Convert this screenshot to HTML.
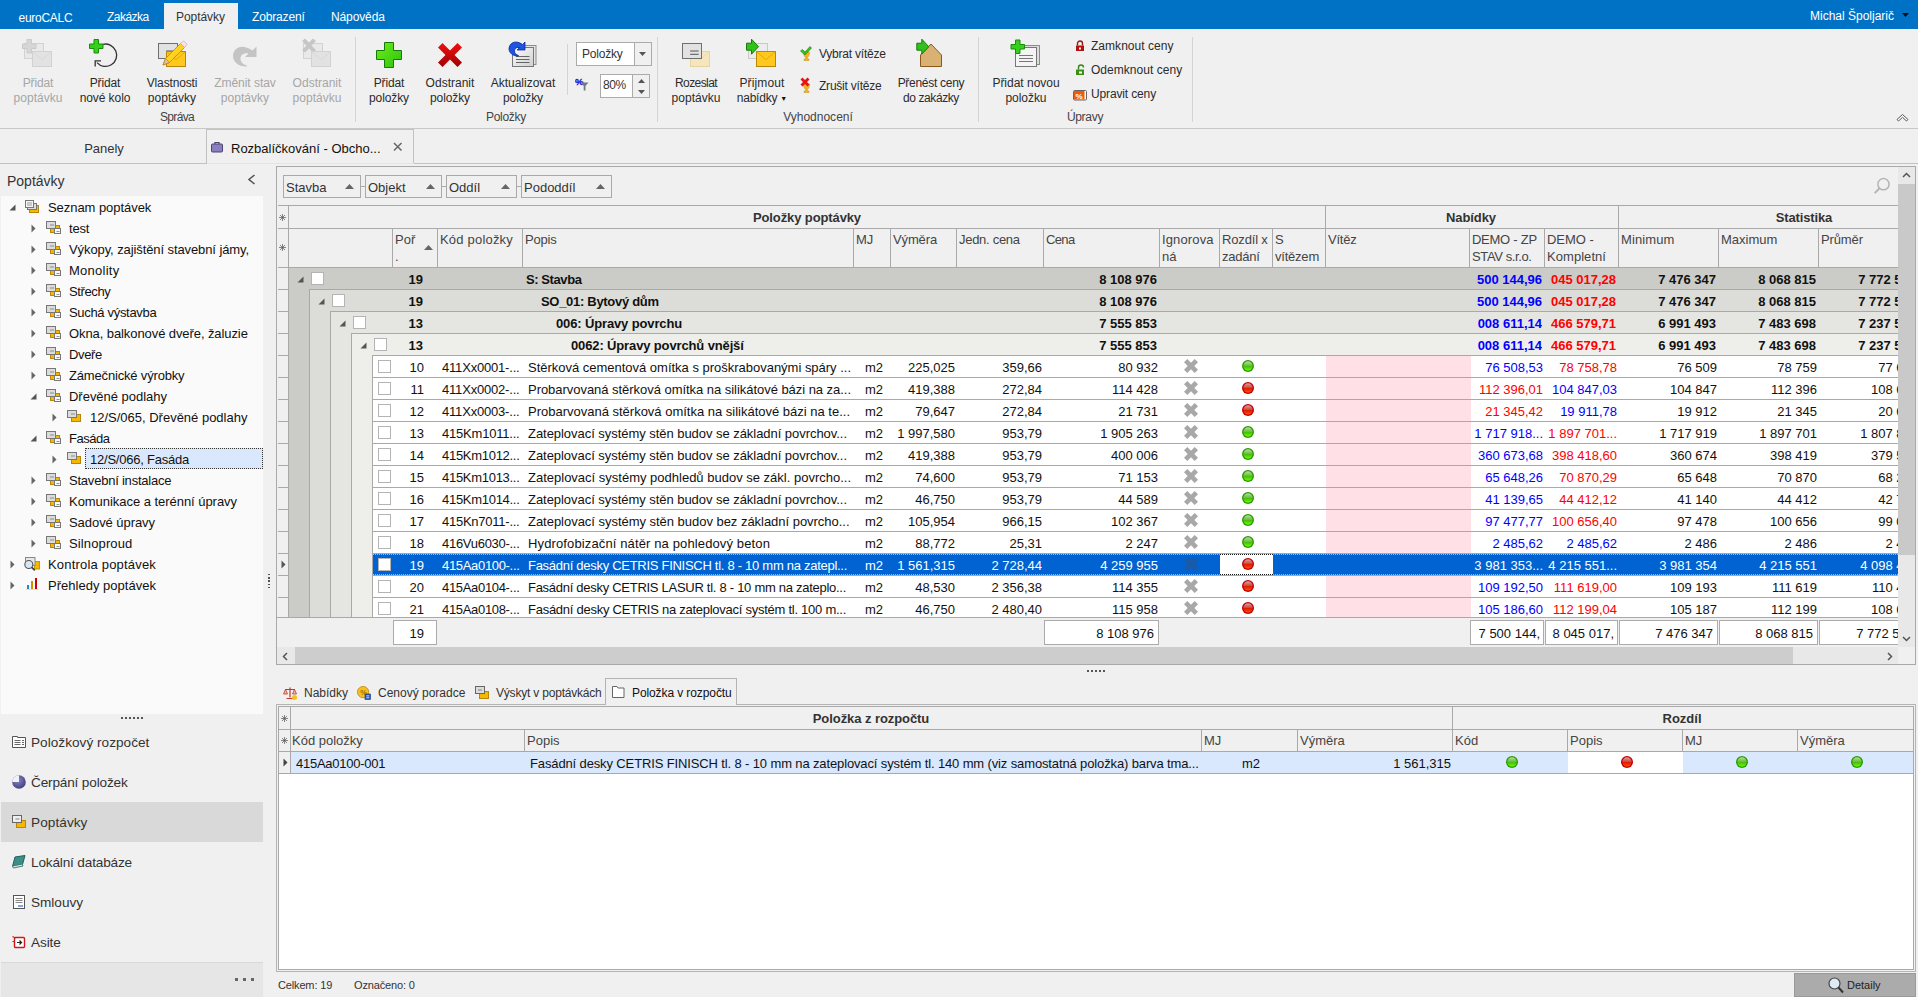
<!DOCTYPE html>
<html lang="cs"><head><meta charset="utf-8"><title>euroCALC</title><style>
*{box-sizing:border-box;margin:0;padding:0}
html,body{width:1918px;height:997px;overflow:hidden;background:#f0f0f0}
body{font-family:"Liberation Sans","DejaVu Sans",sans-serif;font-size:13px;color:#222;position:relative;line-height:15px}
.a{position:absolute;white-space:nowrap}
.c{text-align:center}
.r{text-align:right}
.b{font-weight:bold}
.dis{color:#a6a6a6}
#top{left:0;top:0;width:1918px;height:29px;background:#0072c6;color:#fff}
.sep{width:1px;background:#d4d4d4}
.hl{height:1px;background:#c6c6c6}
.rb{font-size:12px;line-height:15px;color:#2b2b2b}
.rb.dis{color:#a6a6a6}
.gl{color:#444}
.tree{font-size:13px;color:#111}
.hdr{color:#444;font-size:13px}
.cell{font-size:13px;color:#111;height:22px;line-height:22px;overflow:hidden}
.blue{color:#0000ff}
.red{color:#ff0000}
.cell.sw{color:#fff}
.cb{width:13px;height:13px;background:#fff;border:1px solid #b4b4b4}
.fc{background:#fff;border:1px solid #ababab;height:25px;line-height:25px;text-align:right;padding-right:4px;font-size:13px;color:#111;overflow:hidden}
</style></head><body>
<div class="a " style="left:0px;top:0px;width:1918px;height:29px;background:#0072c6"></div>
<div class="a " style="left:164px;top:3px;width:74px;height:27px;background:#f0f0f0"></div>
<div class="a " style="left:18.5px;top:11px;color:#fff;font-size:12px;letter-spacing:-0.279px;">euroCALC</div>
<div class="a " style="left:107px;top:10px;color:#fff;font-size:12px;letter-spacing:-0.537px;">Zakázka</div>
<div class="a " style="left:176px;top:10px;color:#333;font-size:12px;letter-spacing:-0.057px;">Poptávky</div>
<div class="a " style="left:252px;top:10px;color:#fff;font-size:12px;letter-spacing:-0.159px;">Zobrazení</div>
<div class="a " style="left:331px;top:10px;color:#fff;font-size:12px;letter-spacing:-0.115px;">Nápověda</div>
<div class="a " style="left:1810px;top:9px;color:#fff;font-size:12px">Michal Špoljarič</div>
<svg class="a" style="left:1902px;top:13px;" width="7" height="4" viewBox="0 0 7 4"><path d="M0 0h7L3.5 4z" fill="#111"/></svg>
<div class="a " style="left:0px;top:128px;width:1918px;height:1px;background:#c8c8c8"></div>
<svg class="a" style="left:22px;top:37px;" width="32" height="32" viewBox="0 0 32 32"><rect x="2.500" y="6.500" width="19" height="15" fill="#e9e9e9" stroke="#d2d2d2"/><path d="M10 14.500h9M10 17.500h9" stroke="#d2d2d2"/><path d="M5.0 2.5h4.5v4.5h4.5v4.5h-4.5v4.5h-4.5v-4.5h-4.5v-4.5h4.5z" fill="#d6d6d6" stroke="#cacaca" stroke-width="1"/><rect x="10.5" y="14.5" width="19" height="15" fill="#e2e2e2" stroke="#d2d2d2"/><path d="M10.5 14.5L20.0 22.75L29.5 14.5" fill="none" stroke="#d6d6d6" stroke-width="0.8"/></svg>
<div class="a rb dis c" style="left:-22.0px;top:76px;width:120px;letter-spacing:-0.127px;">Přidat</div>
<div class="a rb dis c" style="left:-22.0px;top:91px;width:120px;letter-spacing:0.012px;">poptávku</div>
<svg class="a" style="left:89px;top:37px;" width="32" height="32" viewBox="0 0 32 32"><path d="M14 7.300A11.200 11.200 0 1 1 8 25.600" fill="none" stroke="#333" stroke-width="1.300"/><path d="M6.200 29.500V23.800H12" fill="none" stroke="#333" stroke-width="1.300"/><path d="M5.0 2.5h4.5v4.5h4.5v4.5h-4.5v4.5h-4.5v-4.5h-4.5v-4.5h4.5z" fill="#35d01c" stroke="#1c8a0d" stroke-width="1"/></svg>
<div class="a rb c" style="left:45.0px;top:76px;width:120px;letter-spacing:-0.127px;">Přidat</div>
<div class="a rb c" style="left:45.0px;top:91px;width:120px;letter-spacing:-0.075px;">nové kolo</div>
<svg class="a" style="left:156px;top:37px;" width="32" height="32" viewBox="0 0 32 32"><rect x="2.5" y="6.5" width="19" height="15" fill="#e2e2e2" stroke="#6f6f6f"/><path d="M10.100000000000001 14.0h8.55M10.100000000000001 17.299999999999997h8.55" stroke="#555" stroke-width="1"/><rect x="10.5" y="14.5" width="19" height="15" fill="#ffc81e" stroke="#b8860b"/><path d="M10.5 14.5L20.0 22.75L29.5 14.5" fill="none" stroke="#d9a400" stroke-width="0.8"/><path d="M7 28l2.500-6.500L24.500 6.500l4 4L13.500 25.500z" fill="#ffd21f" stroke="#b8860b" stroke-width="0.800"/><path d="M7 28l2.500-6.500l4 4z" fill="#e8c08a" stroke="#9a7a40" stroke-width="0.600"/><path d="M24.500 6.500l1.500-1.500a2 2 0 0 1 3 0l1 1a2 2 0 0 1 0 3l-1.500 1.500z" fill="#fbe3e3" stroke="#d99" stroke-width="0.600"/></svg>
<div class="a rb c" style="left:112.0px;top:76px;width:120px;letter-spacing:-0.153px;">Vlastnosti</div>
<div class="a rb c" style="left:112.0px;top:91px;width:120px;letter-spacing:0.034px;">poptávky</div>
<svg class="a" style="left:229px;top:37px;" width="32" height="32" viewBox="0 0 32 32"><path d="M27.500 9.500V20H16l3.500-3.500C15 15.500 11.500 18 11.500 21.500C11.500 25 14 27.500 18 28.500l-0.500 1C9 29.500 4 24.500 4 19C4 11.500 12 5.500 23.500 13.500z" fill="#c4c4c4"/></svg>
<div class="a rb dis c" style="left:185.0px;top:76px;width:120px;letter-spacing:-0.029px;">Změnit stav</div>
<div class="a rb dis c" style="left:185.0px;top:91px;width:120px;letter-spacing:0.034px;">poptávky</div>
<svg class="a" style="left:301px;top:37px;" width="32" height="32" viewBox="0 0 32 32"><rect x="2.500" y="6.500" width="19" height="15" fill="#e9e9e9" stroke="#d2d2d2"/><path d="M10 14.500h9M10 17.500h9" stroke="#d2d2d2"/><path d="M1 4l3-2.500l4 4l4-4l3 2.500l-4.500 4.500l4.500 4.500l-3 2.500l-4-4l-4 4l-3-2.500l4.500-4.500z" fill="#c6c6c6"/><rect x="10.5" y="14.5" width="19" height="15" fill="#e2e2e2" stroke="#d2d2d2"/><path d="M10.5 14.5L20.0 22.75L29.5 14.5" fill="none" stroke="#d6d6d6" stroke-width="0.8"/></svg>
<div class="a rb dis c" style="left:257.0px;top:76px;width:120px;letter-spacing:0.012px;">Odstranit</div>
<div class="a rb dis c" style="left:257.0px;top:91px;width:120px;letter-spacing:0.012px;">poptávku</div>
<div class="a rb gl c" style="left:77.0px;top:110px;width:200px;letter-spacing:-0.639px;">Správa</div>
<div class="a sep" style="left:355px;top:37px;width:1px;height:85px;"></div>
<svg class="a" style="left:373px;top:37px;" width="32" height="32" viewBox="0 0 32 32"><defs><linearGradient id="gp" x1="0" y1="0" x2="1" y2="1"><stop offset="0" stop-color="#6cf018"/><stop offset="1" stop-color="#2fc010"/></linearGradient></defs><path d="M11.500 5.500h9v8h8v9h-8v8h-9v-8h-8v-9h8z" fill="url(#gp)" stroke="#157a0a" stroke-width="1"/></svg>
<div class="a rb c" style="left:329.0px;top:76px;width:120px;letter-spacing:-0.127px;">Přidat</div>
<div class="a rb c" style="left:329.0px;top:91px;width:120px;letter-spacing:-0.113px;">položky</div>
<svg class="a" style="left:434px;top:37px;" width="32" height="32" viewBox="0 0 32 32"><defs><linearGradient id="gx" x1="0" y1="0" x2="0" y2="1"><stop offset="0" stop-color="#f01010"/><stop offset="1" stop-color="#a00000"/></linearGradient></defs><path d="M4 10.500L8.500 6L16 13.500L23.500 6L28 10.500L20.500 18L28 25.500L23.500 30L16 22.500L8.500 30L4 25.500L11.500 18z" fill="url(#gx)"/></svg>
<div class="a rb c" style="left:390.0px;top:76px;width:120px;letter-spacing:0.012px;">Odstranit</div>
<div class="a rb c" style="left:390.0px;top:91px;width:120px;letter-spacing:-0.113px;">položky</div>
<svg class="a" style="left:507px;top:37px;" width="32" height="32" viewBox="0 0 32 32"><defs><linearGradient id="gd" x1="0" y1="0" x2="1" y2="1"><stop offset="0" stop-color="#fdfdfd"/><stop offset="1" stop-color="#cfcfcf"/></linearGradient></defs><rect x="8" y="8.500" width="21" height="19" fill="#e4e4e4" stroke="#8c8c8c"/><rect x="5.500" y="10.500" width="21" height="19" fill="url(#gd)" stroke="#777"/><path d="M9 19.500h13.500M9 22.500h13.500M9 25.500h13.500" stroke="#666" stroke-width="1.100"/><path d="M18 5V13H10l2.500-2.500C9.500 9.800 7.500 11.500 7.500 14C7.500 16 9 17.800 11.500 18.500l-0.500 0.700C5.500 19 2 15.500 2 12C2 6.500 8 2 15.500 7.500z" fill="#1f54e0" stroke="#0a2aa0" stroke-width="0.800"/></svg>
<div class="a rb c" style="left:463.0px;top:76px;width:120px;letter-spacing:-0.000px;">Aktualizovat</div>
<div class="a rb c" style="left:463.0px;top:91px;width:120px;letter-spacing:-0.113px;">položky</div>
<div class="a sep" style="left:567px;top:44px;width:1px;height:51px;"></div>
<div class="a " style="left:576px;top:42px;width:76px;height:24px;background:#fff;border:1px solid #ababab"></div>
<div class="a " style="left:634px;top:43px;width:17px;height:22px;background:#f0f0f0;border-left:1px solid #ababab"></div>
<div class="a " style="left:582px;top:47px;color:#333;font-size:12px;letter-spacing:-0.204px;">Položky</div>
<svg class="a" style="left:639px;top:52px;" width="7" height="4" viewBox="0 0 7 4"><path d="M0 0h7L3.500 4z" fill="#555"/></svg>
<svg class="a" style="left:575px;top:76px;" width="16" height="17" viewBox="0 0 16 17"><text x="0" y="9.300" font-family="Liberation Sans, sans-serif" font-size="9.500" font-weight="bold" fill="#1010d0" stroke="#1010d0" stroke-width="0.300">%</text><path d="M6 6.500h7.500l-3 3.500v4.500h-1.800v-4.500z" fill="#70788a"/></svg>
<div class="a " style="left:600px;top:74px;width:50px;height:24px;background:#fff;border:1px solid #ababab"></div>
<div class="a " style="left:632px;top:75px;width:17px;height:22px;background:#f0f0f0;border-left:1px solid #ababab"></div>
<div class="a " style="left:603px;top:78px;color:#333;font-size:12px;letter-spacing:-0.477px;">80%</div>
<svg class="a" style="left:638px;top:79px;" width="7" height="4" viewBox="0 0 7 4"><path d="M0 4h7L3.500 0z" fill="#555"/></svg>
<svg class="a" style="left:638px;top:90px;" width="7" height="4" viewBox="0 0 7 4"><path d="M0 0h7L3.500 4z" fill="#555"/></svg>
<div class="a rb gl c" style="left:406.0px;top:110px;width:200px;letter-spacing:-0.304px;">Položky</div>
<div class="a sep" style="left:657px;top:37px;width:1px;height:85px;"></div>
<svg class="a" style="left:680px;top:37px;" width="32" height="32" viewBox="0 0 32 32"><rect x="10.5" y="14.5" width="19" height="15" fill="#f5e6bd" stroke="#e6d3a0"/><path d="M10.5 14.5L20.0 22.75L29.5 14.5" fill="none" stroke="#ead9a8" stroke-width="0.8"/><rect x="2.5" y="6.5" width="19" height="15" fill="#e2e2e2" stroke="#6f6f6f"/><path d="M10.100000000000001 14.0h8.55M10.100000000000001 17.299999999999997h8.55" stroke="#555" stroke-width="1"/></svg>
<div class="a rb c" style="left:636.0px;top:76px;width:120px;letter-spacing:-0.586px;">Rozeslat</div>
<div class="a rb c" style="left:636.0px;top:91px;width:120px;letter-spacing:0.012px;">poptávku</div>
<svg class="a" style="left:746px;top:37px;" width="32" height="32" viewBox="0 0 32 32"><rect x="2.500" y="6.500" width="19" height="15" fill="#ececec" stroke="#c9c9c9"/><rect x="10.5" y="14.5" width="19" height="15" fill="#ffc81e" stroke="#b8860b"/><path d="M10.5 14.5L20.0 22.75L29.5 14.5" fill="none" stroke="#d9a400" stroke-width="0.8"/><path d="M0.5 6.2h5v-4l7 7.5l-7 7.5v-4h-5z" fill="#2fc21a" stroke="#1a7a0c" stroke-width="1"/></svg>
<div class="a rb c" style="left:702.0px;top:76px;width:120px;letter-spacing:0.148px;">Přijmout</div>
<div class="a rb c" style="left:702.0px;top:91px;width:120px;letter-spacing:-0.219px;">nabídky <span style="font-size:7px;position:relative;top:-1px;color:#111;letter-spacing:0">&#9660;</span></div>
<svg class="a" style="left:799px;top:45px;" width="16" height="17" viewBox="0 0 16 17"><path d="M4.500 7h6c0 3-1 5-2.200 5.500v1.500h1.700v1.500h-5v-1.500h1.700v-1.500c-1.200-0.500-2.200-2.500-2.200-5.500z" fill="#f0b428" stroke="#c8901a" stroke-width="0.5"/><path d="M1.500 6l2-1.500l2.500 2.500l5-5.500l1.500 1.500l-6.500 7z" fill="#35c21a" stroke="#1c7a0c" stroke-width="0.6"/></svg>
<div class="a rb" style="left:819px;top:47px;letter-spacing:-0.223px;">Vybrat vítěze</div>
<svg class="a" style="left:799px;top:77px;" width="16" height="17" viewBox="0 0 16 17"><path d="M4.500 7h6c0 3-1 5-2.200 5.500v1.500h1.700v1.500h-5v-1.500h1.700v-1.500c-1.200-0.500-2.200-2.500-2.200-5.500z" fill="#f0b428" stroke="#c8901a" stroke-width="0.5"/><path d="M1.500 2.500l2-2l2.500 2.500l2.500-2.500l2 2l-2.500 2.500l2.500 2.500l-2 2l-2.500-2.500l-2.500 2.500l-2-2l2.500-2.500z" fill="#e81414"/></svg>
<div class="a rb" style="left:819px;top:79px;letter-spacing:-0.220px;">Zrušit vítěze</div>
<svg class="a" style="left:915px;top:37px;" width="32" height="32" viewBox="0 0 32 32"><path d="M5.500 29.500v-11.500l10.500-11l10.500 11v11.500z" fill="#d9b172" stroke="#8a5a1c" stroke-width="1"/><path d="M1.8 6.2h5v-4l7 7.5l-7 7.5v-4h-5z" fill="#2fc21a" stroke="#1a7a0c" stroke-width="1"/></svg>
<div class="a rb c" style="left:871.0px;top:76px;width:120px;letter-spacing:-0.279px;">Přenést ceny</div>
<div class="a rb c" style="left:871.0px;top:91px;width:120px;letter-spacing:-0.423px;">do zakázky</div>
<div class="a rb gl c" style="left:718.0px;top:110px;width:200px;letter-spacing:0.008px;">Vyhodnocení</div>
<div class="a sep" style="left:978px;top:37px;width:1px;height:85px;"></div>
<svg class="a" style="left:1010px;top:37px;" width="32" height="32" viewBox="0 0 32 32"><rect x="8.500" y="8.500" width="21" height="19" fill="#dcdcdc" stroke="#8c8c8c"/><rect x="5.500" y="10.500" width="21" height="19" fill="#f4f4f4" stroke="#777"/><path d="M9 18.500h14M9 21.500h14M9 24.500h14M9 27" stroke="#777" stroke-width="1.100"/><path d="M5.5 3h4.5v4.5h4.5v4.5h-4.5v4.5h-4.5v-4.5h-4.5v-4.5h4.5z" fill="#35d01c" stroke="#1c8a0d" stroke-width="1"/></svg>
<div class="a rb c" style="left:966.0px;top:76px;width:120px;letter-spacing:-0.016px;">Přidat novou</div>
<div class="a rb c" style="left:966.0px;top:91px;width:120px;letter-spacing:-0.054px;">položku</div>
<svg class="a" style="left:1074px;top:40px;" width="12" height="12" viewBox="0 0 12 12"><path d="M3.500 5.500v-2a2.500 2.500 0 0 1 5 0v2" fill="none" stroke="#a01414" stroke-width="1.400"/><rect x="2" y="5.500" width="8" height="5.500" fill="#b01010"/><rect x="5" y="7.500" width="2" height="2" fill="#fff"/></svg>
<div class="a rb" style="left:1091px;top:39px;letter-spacing:0.035px;">Zamknout ceny</div>
<svg class="a" style="left:1074px;top:64px;" width="12" height="12" viewBox="0 0 12 12"><path d="M4.500 5.500v-2a2.500 2.500 0 0 1 5 0" fill="none" stroke="#2f8a14" stroke-width="1.400"/><rect x="2" y="5.500" width="8" height="5.500" fill="#3a8f14"/><rect x="5" y="7.500" width="3" height="2" fill="#fff"/></svg>
<div class="a rb" style="left:1091px;top:63px;letter-spacing:0.034px;">Odemknout ceny</div>
<svg class="a" style="left:1073px;top:90px;" width="14" height="11" viewBox="0 0 14 11"><rect x="0.500" y="0.500" width="13" height="9.500" rx="1" fill="#fff" stroke="#666"/><rect x="1" y="1" width="10.500" height="8.500" fill="#f05a0a"/><text x="2.500" y="8.500" font-family="Liberation Sans, sans-serif" font-size="8" font-weight="bold" fill="#fff">%</text></svg>
<div class="a rb" style="left:1091px;top:87px;letter-spacing:-0.142px;">Upravit ceny</div>
<div class="a rb gl c" style="left:985.0px;top:110px;width:200px;letter-spacing:-0.303px;">Úpravy</div>
<div class="a sep" style="left:1192px;top:37px;width:1px;height:85px;"></div>
<svg class="a" style="left:1896px;top:113px;" width="13" height="9" viewBox="0 0 13 9"><path d="M1 6.500l5.500-5l5.500 5l-1.500 1.500l-4-3.700l-4 3.700z" fill="#fff" stroke="#555" stroke-width="1"/></svg>
<div class="a " style="left:0px;top:163px;width:206px;height:1px;background:#c2c2c2"></div>
<div class="a  c" style="left:4.0px;top:141px;width:200px;font-size:13px;color:#333">Panely</div>
<div class="a " style="left:206px;top:129px;width:208px;height:35px;background:#f0f0f0;border:1px solid #c2c2c2;border-bottom:none"></div>
<div class="a " style="left:414px;top:163px;width:1504px;height:1px;background:#c2c2c2"></div>
<div class="a " style="left:207px;top:163px;width:207px;height:1px;background:#e4e4e4"></div>
<svg class="a" style="left:211px;top:141px;" width="13" height="12" viewBox="0 0 13 12"><path d="M4 3v-1.500h4v1.500" fill="none" stroke="#4a4470" stroke-width="1.200"/><rect x="0.500" y="3" width="11" height="8" rx="1" fill="#8a7fc0" stroke="#4a4470"/></svg>
<div class="a " style="left:231px;top:141px;font-size:13px;color:#111">Rozbalíčkování - Obcho...</div>
<svg class="a" style="left:393px;top:142px;" width="10" height="10" viewBox="0 0 10 10"><path d="M1 1l7.500 7.500M8.500 1l-7.500 7.500" stroke="#666" stroke-width="1.500"/></svg>
<div class="a " style="left:7px;top:172px;font-size:14px;color:#333;line-height:18px">Poptávky</div>
<svg class="a" style="left:247px;top:174px;" width="9" height="11" viewBox="0 0 9 11"><path d="M7.500 1l-5.500 4.500l5.500 4.500" fill="none" stroke="#555" stroke-width="1.600"/></svg>
<div class="a " style="left:1px;top:196px;width:262px;height:518px;background:#fafafa"></div>
<svg class="a" style="left:9px;top:204px;" width="7" height="7" viewBox="0 0 7 7"><path d="M6.500 0.500v6h-6z" fill="#555"/></svg>
<svg class="a" style="left:25px;top:200px;" width="16" height="14" viewBox="0 0 16 14"><rect x="4.500" y="5.500" width="9" height="7" fill="#f5b800" stroke="#b8860b"/><rect x="2.500" y="3.500" width="9" height="6" fill="#dcdcdc" stroke="#777"/><rect x="0.500" y="0.500" width="8" height="7" fill="#f4f4f4" stroke="#777"/><path d="M2 3h5M2 5h5" stroke="#888" stroke-width="0.800"/></svg>
<div class="a tree" style="left:48px;top:198px;height:20px;line-height:20px;letter-spacing:-0.052px;">Seznam poptávek</div>
<svg class="a" style="left:31px;top:224px;" width="5" height="9" viewBox="0 0 5 9"><path d="M0.500 0.500l4 4l-4 4z" fill="#666"/></svg>
<svg class="a" style="left:46px;top:221px;" width="16" height="14" viewBox="0 0 16 14"><rect x="4.500" y="4.500" width="9" height="7" fill="#f5b800" stroke="#b8860b"/><rect x="0.500" y="0.500" width="9" height="7" fill="#dcdcdc" stroke="#777"/><path d="M4 4h4" stroke="#777" stroke-width="0.800"/><rect x="8.500" y="7.500" width="6" height="5" fill="#fafafa" stroke="#777"/><path d="M10.500 10.500h3" stroke="#777" stroke-width="0.800"/></svg>
<div class="a tree" style="left:69px;top:219px;height:20px;line-height:20px;letter-spacing:-0.167px;">test</div>
<svg class="a" style="left:31px;top:245px;" width="5" height="9" viewBox="0 0 5 9"><path d="M0.500 0.500l4 4l-4 4z" fill="#666"/></svg>
<svg class="a" style="left:46px;top:242px;" width="16" height="14" viewBox="0 0 16 14"><rect x="4.500" y="4.500" width="9" height="7" fill="#f5b800" stroke="#b8860b"/><rect x="0.500" y="0.500" width="9" height="7" fill="#dcdcdc" stroke="#777"/><path d="M4 4h4" stroke="#777" stroke-width="0.800"/><rect x="8.500" y="7.500" width="6" height="5" fill="#fafafa" stroke="#777"/><path d="M10.500 10.500h3" stroke="#777" stroke-width="0.800"/></svg>
<div class="a tree" style="left:69px;top:240px;height:20px;line-height:20px;letter-spacing:-0.095px;">Výkopy, zajištění stavební jámy,</div>
<svg class="a" style="left:31px;top:266px;" width="5" height="9" viewBox="0 0 5 9"><path d="M0.500 0.500l4 4l-4 4z" fill="#666"/></svg>
<svg class="a" style="left:46px;top:263px;" width="16" height="14" viewBox="0 0 16 14"><rect x="4.500" y="4.500" width="9" height="7" fill="#f5b800" stroke="#b8860b"/><rect x="0.500" y="0.500" width="9" height="7" fill="#dcdcdc" stroke="#777"/><path d="M4 4h4" stroke="#777" stroke-width="0.800"/><rect x="8.500" y="7.500" width="6" height="5" fill="#fafafa" stroke="#777"/><path d="M10.500 10.500h3" stroke="#777" stroke-width="0.800"/></svg>
<div class="a tree" style="left:69px;top:261px;height:20px;line-height:20px;letter-spacing:0.247px;">Monolity</div>
<svg class="a" style="left:31px;top:287px;" width="5" height="9" viewBox="0 0 5 9"><path d="M0.500 0.500l4 4l-4 4z" fill="#666"/></svg>
<svg class="a" style="left:46px;top:284px;" width="16" height="14" viewBox="0 0 16 14"><rect x="4.500" y="4.500" width="9" height="7" fill="#f5b800" stroke="#b8860b"/><rect x="0.500" y="0.500" width="9" height="7" fill="#dcdcdc" stroke="#777"/><path d="M4 4h4" stroke="#777" stroke-width="0.800"/><rect x="8.500" y="7.500" width="6" height="5" fill="#fafafa" stroke="#777"/><path d="M10.500 10.500h3" stroke="#777" stroke-width="0.800"/></svg>
<div class="a tree" style="left:69px;top:282px;height:20px;line-height:20px;letter-spacing:-0.383px;">Střechy</div>
<svg class="a" style="left:31px;top:308px;" width="5" height="9" viewBox="0 0 5 9"><path d="M0.500 0.500l4 4l-4 4z" fill="#666"/></svg>
<svg class="a" style="left:46px;top:305px;" width="16" height="14" viewBox="0 0 16 14"><rect x="4.500" y="4.500" width="9" height="7" fill="#f5b800" stroke="#b8860b"/><rect x="0.500" y="0.500" width="9" height="7" fill="#dcdcdc" stroke="#777"/><path d="M4 4h4" stroke="#777" stroke-width="0.800"/><rect x="8.500" y="7.500" width="6" height="5" fill="#fafafa" stroke="#777"/><path d="M10.500 10.500h3" stroke="#777" stroke-width="0.800"/></svg>
<div class="a tree" style="left:69px;top:303px;height:20px;line-height:20px;letter-spacing:-0.320px;">Suchá výstavba</div>
<svg class="a" style="left:31px;top:329px;" width="5" height="9" viewBox="0 0 5 9"><path d="M0.500 0.500l4 4l-4 4z" fill="#666"/></svg>
<svg class="a" style="left:46px;top:326px;" width="16" height="14" viewBox="0 0 16 14"><rect x="4.500" y="4.500" width="9" height="7" fill="#f5b800" stroke="#b8860b"/><rect x="0.500" y="0.500" width="9" height="7" fill="#dcdcdc" stroke="#777"/><path d="M4 4h4" stroke="#777" stroke-width="0.800"/><rect x="8.500" y="7.500" width="6" height="5" fill="#fafafa" stroke="#777"/><path d="M10.500 10.500h3" stroke="#777" stroke-width="0.800"/></svg>
<div class="a tree" style="left:69px;top:324px;height:20px;line-height:20px;letter-spacing:-0.086px;">Okna, balkonové dveře, žaluzie</div>
<svg class="a" style="left:31px;top:350px;" width="5" height="9" viewBox="0 0 5 9"><path d="M0.500 0.500l4 4l-4 4z" fill="#666"/></svg>
<svg class="a" style="left:46px;top:347px;" width="16" height="14" viewBox="0 0 16 14"><rect x="4.500" y="4.500" width="9" height="7" fill="#f5b800" stroke="#b8860b"/><rect x="0.500" y="0.500" width="9" height="7" fill="#dcdcdc" stroke="#777"/><path d="M4 4h4" stroke="#777" stroke-width="0.800"/><rect x="8.500" y="7.500" width="6" height="5" fill="#fafafa" stroke="#777"/><path d="M10.500 10.500h3" stroke="#777" stroke-width="0.800"/></svg>
<div class="a tree" style="left:69px;top:345px;height:20px;line-height:20px;letter-spacing:-0.358px;">Dveře</div>
<svg class="a" style="left:31px;top:371px;" width="5" height="9" viewBox="0 0 5 9"><path d="M0.500 0.500l4 4l-4 4z" fill="#666"/></svg>
<svg class="a" style="left:46px;top:368px;" width="16" height="14" viewBox="0 0 16 14"><rect x="4.500" y="4.500" width="9" height="7" fill="#f5b800" stroke="#b8860b"/><rect x="0.500" y="0.500" width="9" height="7" fill="#dcdcdc" stroke="#777"/><path d="M4 4h4" stroke="#777" stroke-width="0.800"/><rect x="8.500" y="7.500" width="6" height="5" fill="#fafafa" stroke="#777"/><path d="M10.500 10.500h3" stroke="#777" stroke-width="0.800"/></svg>
<div class="a tree" style="left:69px;top:366px;height:20px;line-height:20px;letter-spacing:-0.171px;">Zámečnické výrobky</div>
<svg class="a" style="left:30px;top:393px;" width="7" height="7" viewBox="0 0 7 7"><path d="M6.500 0.500v6h-6z" fill="#555"/></svg>
<svg class="a" style="left:46px;top:389px;" width="16" height="14" viewBox="0 0 16 14"><rect x="4.500" y="4.500" width="9" height="7" fill="#f5b800" stroke="#b8860b"/><rect x="0.500" y="0.500" width="9" height="7" fill="#dcdcdc" stroke="#777"/><path d="M4 4h4" stroke="#777" stroke-width="0.800"/><rect x="8.500" y="7.500" width="6" height="5" fill="#fafafa" stroke="#777"/><path d="M10.500 10.500h3" stroke="#777" stroke-width="0.800"/></svg>
<div class="a tree" style="left:69px;top:387px;height:20px;line-height:20px;letter-spacing:-0.020px;">Dřevěné podlahy</div>
<svg class="a" style="left:52px;top:413px;" width="5" height="9" viewBox="0 0 5 9"><path d="M0.500 0.500l4 4l-4 4z" fill="#666"/></svg>
<svg class="a" style="left:67px;top:410px;" width="16" height="14" viewBox="0 0 16 14"><rect x="4.500" y="4.500" width="9" height="7" fill="#f5b800" stroke="#b8860b"/><rect x="0.500" y="0.500" width="9" height="7" fill="#dcdcdc" stroke="#777"/><path d="M4 4h4" stroke="#777" stroke-width="0.800"/></svg>
<div class="a tree" style="left:90px;top:408px;height:20px;line-height:20px;letter-spacing:-0.006px;">12/S/065, Dřevěné podlahy</div>
<svg class="a" style="left:30px;top:435px;" width="7" height="7" viewBox="0 0 7 7"><path d="M6.500 0.500v6h-6z" fill="#555"/></svg>
<svg class="a" style="left:46px;top:431px;" width="16" height="14" viewBox="0 0 16 14"><rect x="4.500" y="4.500" width="9" height="7" fill="#f5b800" stroke="#b8860b"/><rect x="0.500" y="0.500" width="9" height="7" fill="#dcdcdc" stroke="#777"/><path d="M4 4h4" stroke="#777" stroke-width="0.800"/><rect x="8.500" y="7.500" width="6" height="5" fill="#fafafa" stroke="#777"/><path d="M10.500 10.500h3" stroke="#777" stroke-width="0.800"/></svg>
<div class="a tree" style="left:69px;top:429px;height:20px;line-height:20px;letter-spacing:-0.462px;">Fasáda</div>
<svg class="a" style="left:52px;top:455px;" width="5" height="9" viewBox="0 0 5 9"><path d="M0.500 0.500l4 4l-4 4z" fill="#666"/></svg>
<svg class="a" style="left:67px;top:452px;" width="16" height="14" viewBox="0 0 16 14"><rect x="4.500" y="4.500" width="9" height="7" fill="#f5b800" stroke="#b8860b"/><rect x="0.500" y="0.500" width="9" height="7" fill="#dcdcdc" stroke="#777"/><path d="M4 4h4" stroke="#777" stroke-width="0.800"/></svg>
<div class="a " style="left:85px;top:448px;width:178px;height:21px;background:#d9e8fc;border:1px dotted #333"></div>
<div class="a tree" style="left:90px;top:450px;height:20px;line-height:20px;letter-spacing:-0.228px;">12/S/066, Fasáda</div>
<svg class="a" style="left:31px;top:476px;" width="5" height="9" viewBox="0 0 5 9"><path d="M0.500 0.500l4 4l-4 4z" fill="#666"/></svg>
<svg class="a" style="left:46px;top:473px;" width="16" height="14" viewBox="0 0 16 14"><rect x="4.500" y="4.500" width="9" height="7" fill="#f5b800" stroke="#b8860b"/><rect x="0.500" y="0.500" width="9" height="7" fill="#dcdcdc" stroke="#777"/><path d="M4 4h4" stroke="#777" stroke-width="0.800"/><rect x="8.500" y="7.500" width="6" height="5" fill="#fafafa" stroke="#777"/><path d="M10.500 10.500h3" stroke="#777" stroke-width="0.800"/></svg>
<div class="a tree" style="left:69px;top:471px;height:20px;line-height:20px;letter-spacing:-0.219px;">Stavební instalace</div>
<svg class="a" style="left:31px;top:497px;" width="5" height="9" viewBox="0 0 5 9"><path d="M0.500 0.500l4 4l-4 4z" fill="#666"/></svg>
<svg class="a" style="left:46px;top:494px;" width="16" height="14" viewBox="0 0 16 14"><rect x="4.500" y="4.500" width="9" height="7" fill="#f5b800" stroke="#b8860b"/><rect x="0.500" y="0.500" width="9" height="7" fill="#dcdcdc" stroke="#777"/><path d="M4 4h4" stroke="#777" stroke-width="0.800"/><rect x="8.500" y="7.500" width="6" height="5" fill="#fafafa" stroke="#777"/><path d="M10.500 10.500h3" stroke="#777" stroke-width="0.800"/></svg>
<div class="a tree" style="left:69px;top:492px;height:20px;line-height:20px;letter-spacing:-0.041px;">Komunikace a terénní úpravy</div>
<svg class="a" style="left:31px;top:518px;" width="5" height="9" viewBox="0 0 5 9"><path d="M0.500 0.500l4 4l-4 4z" fill="#666"/></svg>
<svg class="a" style="left:46px;top:515px;" width="16" height="14" viewBox="0 0 16 14"><rect x="4.500" y="4.500" width="9" height="7" fill="#f5b800" stroke="#b8860b"/><rect x="0.500" y="0.500" width="9" height="7" fill="#dcdcdc" stroke="#777"/><path d="M4 4h4" stroke="#777" stroke-width="0.800"/><rect x="8.500" y="7.500" width="6" height="5" fill="#fafafa" stroke="#777"/><path d="M10.500 10.500h3" stroke="#777" stroke-width="0.800"/></svg>
<div class="a tree" style="left:69px;top:513px;height:20px;line-height:20px;letter-spacing:-0.056px;">Sadové úpravy</div>
<svg class="a" style="left:31px;top:539px;" width="5" height="9" viewBox="0 0 5 9"><path d="M0.500 0.500l4 4l-4 4z" fill="#666"/></svg>
<svg class="a" style="left:46px;top:536px;" width="16" height="14" viewBox="0 0 16 14"><rect x="4.500" y="4.500" width="9" height="7" fill="#f5b800" stroke="#b8860b"/><rect x="0.500" y="0.500" width="9" height="7" fill="#dcdcdc" stroke="#777"/><path d="M4 4h4" stroke="#777" stroke-width="0.800"/><rect x="8.500" y="7.500" width="6" height="5" fill="#fafafa" stroke="#777"/><path d="M10.500 10.500h3" stroke="#777" stroke-width="0.800"/></svg>
<div class="a tree" style="left:69px;top:534px;height:20px;line-height:20px;letter-spacing:0.124px;">Silnoproud</div>
<svg class="a" style="left:10px;top:560px;" width="5" height="9" viewBox="0 0 5 9"><path d="M0.500 0.500l4 4l-4 4z" fill="#666"/></svg>
<svg class="a" style="left:24px;top:557px;" width="16" height="14" viewBox="0 0 16 14"><rect x="10.500" y="4.500" width="5" height="7.500" fill="#f5b800" stroke="#c8960b"/><rect x="1.500" y="0.500" width="9.500" height="8" fill="#e8e8e8" stroke="#888"/><circle cx="4.800" cy="7.500" r="4" fill="#d6e6f5" stroke="#555" stroke-width="1.100"/><path d="M7.800 10.300l3 3" stroke="#444" stroke-width="1.800"/></svg>
<div class="a tree" style="left:48px;top:555px;height:20px;line-height:20px;letter-spacing:0.188px;">Kontrola poptávek</div>
<svg class="a" style="left:10px;top:581px;" width="5" height="9" viewBox="0 0 5 9"><path d="M0.500 0.500l4 4l-4 4z" fill="#666"/></svg>
<svg class="a" style="left:25px;top:578px;" width="16" height="14" viewBox="0 0 16 14"><rect x="2" y="7" width="2" height="4" fill="#1e8ad0"/><rect x="6" y="3" width="2" height="8" fill="#d89000"/><rect x="10" y="0" width="2" height="11" fill="#c80000"/><path d="M1 11.500h12" stroke="#c8c8c8" stroke-width="0.600"/></svg>
<div class="a tree" style="left:48px;top:576px;height:20px;line-height:20px;letter-spacing:0.018px;">Přehledy poptávek</div>
<div class="a " style="left:121px;top:717px;width:23px;height:2px;background:repeating-linear-gradient(90deg,#555 0 2px,transparent 2px 4px)"></div>
<div class="a " style="left:268px;top:574px;width:2px;height:14px;background:repeating-linear-gradient(180deg,#555 0 1.500px,transparent 1.500px 3.200px)"></div>
<svg class="a" style="left:12px;top:735px;" width="15" height="14" viewBox="0 0 15 14"><path d="M0.500 1.500h5v1h8v10h-13z" fill="#fff" stroke="#555"/><path d="M2.500 5.500h6M2.500 7.500h6M2.500 9.500h6M10 5.500h2M10 7.500h2M10 9.500h2" stroke="#555" stroke-width="0.900"/></svg>
<div class="a " style="left:31px;top:733px;font-size:13.600px;color:#333;line-height:20px;letter-spacing:0.029px;">Položkový rozpočet</div>
<svg class="a" style="left:12px;top:775px;" width="15" height="14" viewBox="0 0 15 14"><defs><radialGradient id="pg" cx="0.400" cy="0.350" r="0.700"><stop offset="0" stop-color="#8a88c0"/><stop offset="1" stop-color="#3f3d80"/></radialGradient></defs><circle cx="7" cy="7" r="6.800" fill="url(#pg)"/><path d="M7 7v-6.800a6.800 6.800 0 0 0 -6.800 6.800z" fill="#f0f0f8"/></svg>
<div class="a " style="left:31px;top:773px;font-size:13.600px;color:#333;line-height:20px;letter-spacing:-0.160px;">Čerpání položek</div>
<div class="a " style="left:1px;top:802px;width:262px;height:40px;background:#d9d9d9"></div>
<svg class="a" style="left:12px;top:815px;" width="15" height="14" viewBox="0 0 15 14"><rect x="4.500" y="5.500" width="9" height="7" fill="#f5b800" stroke="#b8860b"/><rect x="0.500" y="0.500" width="9" height="7" fill="#efefef" stroke="#666"/><path d="M3.500 4h4" stroke="#777" stroke-width="0.900"/></svg>
<div class="a " style="left:31px;top:813px;font-size:13.600px;color:#333;line-height:20px;letter-spacing:0.072px;">Poptávky</div>
<svg class="a" style="left:12px;top:855px;" width="15" height="14" viewBox="0 0 15 14"><path d="M3 2l10-1.500l-2.500 9l-10 2z" fill="#3a9088" stroke="#1f5f5a"/><path d="M0.500 11.500l1 1.500l9.500-2l-0.500-1.500" fill="#e8e8e8" stroke="#1f5f5a" stroke-width="0.800"/></svg>
<div class="a " style="left:31px;top:853px;font-size:13.600px;color:#333;line-height:20px;letter-spacing:-0.159px;">Lokální databáze</div>
<svg class="a" style="left:12px;top:895px;" width="15" height="14" viewBox="0 0 15 14"><rect x="1.500" y="0.500" width="11" height="13" fill="#fff" stroke="#555"/><path d="M3.500 3.500h7M3.500 5.500h7M3.500 7.500h7" stroke="#777" stroke-width="0.900"/><path d="M6 11h5" stroke="#2a6ad0" stroke-width="1.200"/></svg>
<div class="a " style="left:31px;top:893px;font-size:13.600px;color:#333;line-height:20px;letter-spacing:-0.018px;">Smlouvy</div>
<svg class="a" style="left:12px;top:935px;" width="15" height="14" viewBox="0 0 15 14"><rect x="2.500" y="2.500" width="10" height="10" rx="1" fill="#fff" stroke="#d01818" stroke-width="1.400"/><path d="M0.500 1.500l3 1.500M0.500 6.500h2.500" stroke="#d01818" stroke-width="1.200"/><path d="M5 7.500h4M7.500 5.500l2 2l-2 2" fill="none" stroke="#222" stroke-width="1.200"/></svg>
<div class="a " style="left:31px;top:933px;font-size:13.600px;color:#333;line-height:20px;letter-spacing:-0.107px;">Asite</div>
<div class="a " style="left:1px;top:962px;width:262px;height:35px;background:#e6e6e6;border-top:1px solid #d9d9d9"></div>
<div class="a " style="left:235px;top:978px;width:20px;height:3px;background:repeating-linear-gradient(90deg,#666 0 3px,transparent 3px 8px)"></div>
<div class="a " style="left:276px;top:166px;width:1640px;height:499px;background:#f0f0f0;border:1px solid #a9a9a9"></div>
<div class="a " style="left:283px;top:175px;width:78px;height:23px;background:#f0f0f0;border:1px solid #a9a9a9"></div>
<div class="a hdr" style="left:286px;top:180px;color:#333">Stavba</div>
<svg class="a" style="left:345px;top:184px;" width="9" height="5" viewBox="0 0 9 5"><path d="M0 5h9L4.500 0z" fill="#666"/></svg>
<div class="a " style="left:365px;top:175px;width:77px;height:23px;background:#f0f0f0;border:1px solid #a9a9a9"></div>
<div class="a hdr" style="left:368px;top:180px;color:#333">Objekt</div>
<svg class="a" style="left:426px;top:184px;" width="9" height="5" viewBox="0 0 9 5"><path d="M0 5h9L4.500 0z" fill="#666"/></svg>
<div class="a " style="left:446px;top:175px;width:71px;height:23px;background:#f0f0f0;border:1px solid #a9a9a9"></div>
<div class="a hdr" style="left:449px;top:180px;color:#333">Oddíl</div>
<svg class="a" style="left:501px;top:184px;" width="9" height="5" viewBox="0 0 9 5"><path d="M0 5h9L4.500 0z" fill="#666"/></svg>
<div class="a " style="left:521px;top:175px;width:91px;height:23px;background:#f0f0f0;border:1px solid #a9a9a9"></div>
<div class="a hdr" style="left:524px;top:180px;color:#333">Pododdíl</div>
<svg class="a" style="left:596px;top:184px;" width="9" height="5" viewBox="0 0 9 5"><path d="M0 5h9L4.500 0z" fill="#666"/></svg>
<div class="a " style="left:361px;top:186px;width:4px;height:1px;background:#a9a9a9"></div>
<div class="a " style="left:442px;top:186px;width:4px;height:1px;background:#a9a9a9"></div>
<div class="a " style="left:517px;top:186px;width:4px;height:1px;background:#a9a9a9"></div>
<svg class="a" style="left:1872px;top:176px;" width="19" height="19" viewBox="0 0 19 19"><circle cx="11.500" cy="8.200" r="5.600" fill="none" stroke="#b4b4b4" stroke-width="1.500"/><path d="M7.500 12.300l-4.800 4.800" stroke="#b4b4b4" stroke-width="2"/></svg>
<div class="a " style="left:278px;top:205px;width:1620px;height:1px;background:#a9a9a9"></div>
<div class="a " style="left:278px;top:228px;width:1620px;height:1px;background:#a9a9a9"></div>
<div class="a " style="left:278px;top:267px;width:1620px;height:1px;background:#a9a9a9"></div>
<div class="a " style="left:288px;top:205px;width:1px;height:412px;background:#a9a9a9"></div>
<svg class="a" style="left:279px;top:214px;" width="7" height="7" viewBox="0 0 7 7"><path d="M3.500 0v7M0 3.500h7M1 1l5 5M6 1l-5 5" stroke="#555" stroke-width="0.700" fill="none"/></svg>
<svg class="a" style="left:279px;top:244px;" width="7" height="7" viewBox="0 0 7 7"><path d="M3.500 0v7M0 3.500h7M1 1l5 5M6 1l-5 5" stroke="#555" stroke-width="0.700" fill="none"/></svg>
<div class="a " style="left:1325px;top:206px;width:1px;height:23px;background:#a9a9a9"></div>
<div class="a " style="left:1618px;top:206px;width:1px;height:23px;background:#a9a9a9"></div>
<div class="a b c" style="left:707.0px;top:210px;width:200px;color:#333;letter-spacing:-0.113px;">Položky poptávky</div>
<div class="a b c" style="left:1371.0px;top:210px;width:200px;color:#333;letter-spacing:-0.083px;">Nabídky</div>
<div class="a b c" style="left:1704.0px;top:210px;width:200px;color:#333;letter-spacing:-0.141px;">Statistika</div>
<div class="a " style="left:392px;top:229px;width:1px;height:38px;background:#a9a9a9"></div>
<div class="a hdr" style="left:395px;top:231px;line-height:17px;">Poř</div>
<div class="a hdr" style="left:395px;top:248px;line-height:17px;">.</div>
<div class="a " style="left:437px;top:229px;width:1px;height:38px;background:#a9a9a9"></div>
<div class="a hdr" style="left:440px;top:231px;line-height:17px;letter-spacing:0.197px;">Kód položky</div>
<div class="a " style="left:522px;top:229px;width:1px;height:38px;background:#a9a9a9"></div>
<div class="a hdr" style="left:525px;top:231px;line-height:17px;letter-spacing:-0.206px;">Popis</div>
<div class="a " style="left:853px;top:229px;width:1px;height:38px;background:#a9a9a9"></div>
<div class="a hdr" style="left:856px;top:231px;line-height:17px;">MJ</div>
<div class="a " style="left:890px;top:229px;width:1px;height:38px;background:#a9a9a9"></div>
<div class="a hdr" style="left:893px;top:231px;line-height:17px;letter-spacing:-0.133px;">Výměra</div>
<div class="a " style="left:956px;top:229px;width:1px;height:38px;background:#a9a9a9"></div>
<div class="a hdr" style="left:959px;top:231px;line-height:17px;letter-spacing:-0.291px;">Jedn. cena</div>
<div class="a " style="left:1043px;top:229px;width:1px;height:38px;background:#a9a9a9"></div>
<div class="a hdr" style="left:1046px;top:231px;line-height:17px;letter-spacing:-0.645px;">Cena</div>
<div class="a " style="left:1159px;top:229px;width:1px;height:38px;background:#a9a9a9"></div>
<div class="a hdr" style="left:1162px;top:231px;line-height:17px;letter-spacing:0.138px;">Ignorova</div>
<div class="a hdr" style="left:1162px;top:248px;line-height:17px;">ná</div>
<div class="a " style="left:1219px;top:229px;width:1px;height:38px;background:#a9a9a9"></div>
<div class="a hdr" style="left:1222px;top:231px;line-height:17px;letter-spacing:-0.159px;">Rozdíl x</div>
<div class="a hdr" style="left:1222px;top:248px;line-height:17px;letter-spacing:-0.224px;">zadání</div>
<div class="a " style="left:1272px;top:229px;width:1px;height:38px;background:#a9a9a9"></div>
<div class="a hdr" style="left:1275px;top:231px;line-height:17px;">S</div>
<div class="a hdr" style="left:1275px;top:248px;line-height:17px;letter-spacing:-0.217px;">vítězem</div>
<div class="a " style="left:1325px;top:229px;width:1px;height:38px;background:#a9a9a9"></div>
<div class="a hdr" style="left:1328px;top:231px;line-height:17px;letter-spacing:-0.225px;">Vítěz</div>
<div class="a " style="left:1469px;top:229px;width:1px;height:38px;background:#a9a9a9"></div>
<div class="a hdr" style="left:1472px;top:231px;line-height:17px;letter-spacing:-0.264px;">DEMO - ZP</div>
<div class="a hdr" style="left:1472px;top:248px;line-height:17px;letter-spacing:-0.384px;">STAV s.r.o.</div>
<div class="a " style="left:1544px;top:229px;width:1px;height:38px;background:#a9a9a9"></div>
<div class="a hdr" style="left:1547px;top:231px;line-height:17px;letter-spacing:-0.042px;">DEMO -</div>
<div class="a hdr" style="left:1547px;top:248px;line-height:17px;letter-spacing:0.050px;">Kompletní</div>
<div class="a " style="left:1618px;top:229px;width:1px;height:38px;background:#a9a9a9"></div>
<div class="a hdr" style="left:1621px;top:231px;line-height:17px;letter-spacing:0.109px;">Minimum</div>
<div class="a " style="left:1718px;top:229px;width:1px;height:38px;background:#a9a9a9"></div>
<div class="a hdr" style="left:1721px;top:231px;line-height:17px;letter-spacing:0.008px;">Maximum</div>
<div class="a " style="left:1818px;top:229px;width:1px;height:38px;background:#a9a9a9"></div>
<div class="a hdr" style="left:1821px;top:231px;line-height:17px;letter-spacing:-0.121px;">Průměr</div>
<svg class="a" style="left:424px;top:245px;" width="9" height="5" viewBox="0 0 9 5"><path d="M0 5h9L4.500 0z" fill="#666"/></svg>
<div class="a " style="left:289px;top:268px;width:1609px;height:349px;background:#cbccc7"></div>
<div class="a " style="left:309px;top:289px;width:1589px;height:328px;background:#dcddd9;border-left:1px solid #a9a9a9;border-top:1px solid #a9a9a9"></div>
<div class="a " style="left:330px;top:311px;width:1568px;height:306px;background:#e5e6e2;border-left:1px solid #a9a9a9;border-top:1px solid #a9a9a9"></div>
<div class="a " style="left:351px;top:333px;width:1547px;height:284px;background:#eeeeea;border-left:1px solid #a9a9a9;border-top:1px solid #a9a9a9"></div>
<div class="a " style="left:372px;top:355px;width:1526px;height:262px;background:#fff;border-left:1px solid #a9a9a9;border-top:1px solid #a9a9a9"></div>
<div class="a " style="left:278px;top:289px;width:10px;height:1px;background:#a9a9a9"></div>
<div class="a " style="left:278px;top:311px;width:10px;height:1px;background:#a9a9a9"></div>
<div class="a " style="left:278px;top:333px;width:10px;height:1px;background:#a9a9a9"></div>
<div class="a " style="left:278px;top:355px;width:10px;height:1px;background:#a9a9a9"></div>
<div class="a " style="left:278px;top:377px;width:10px;height:1px;background:#a9a9a9"></div>
<div class="a " style="left:278px;top:399px;width:10px;height:1px;background:#a9a9a9"></div>
<div class="a " style="left:278px;top:421px;width:10px;height:1px;background:#a9a9a9"></div>
<div class="a " style="left:278px;top:443px;width:10px;height:1px;background:#a9a9a9"></div>
<div class="a " style="left:278px;top:465px;width:10px;height:1px;background:#a9a9a9"></div>
<div class="a " style="left:278px;top:487px;width:10px;height:1px;background:#a9a9a9"></div>
<div class="a " style="left:278px;top:509px;width:10px;height:1px;background:#a9a9a9"></div>
<div class="a " style="left:278px;top:531px;width:10px;height:1px;background:#a9a9a9"></div>
<div class="a " style="left:278px;top:553px;width:10px;height:1px;background:#a9a9a9"></div>
<div class="a " style="left:278px;top:575px;width:10px;height:1px;background:#a9a9a9"></div>
<div class="a " style="left:278px;top:597px;width:10px;height:1px;background:#a9a9a9"></div>
<div class="a " style="left:278px;top:619px;width:10px;height:1px;background:#a9a9a9"></div>
<svg class="a" style="left:297px;top:276px;" width="7" height="7" viewBox="0 0 7 7"><path d="M6.500 0.500v6h-6z" fill="#555"/></svg>
<div class="a cb" style="left:311px;top:272px;width:13px;height:13px;"></div>
<div class="a cell b r" style="left:393px;top:269px;width:30px;">19</div>
<div class="a cell b" style="left:526px;top:269px;width:320px;letter-spacing:-0.417px;">S: Stavba</div>
<div class="a cell b r" style="left:1047px;top:269px;width:110px;">8 108 976</div>
<div class="a cell b blue r" style="left:1470px;top:269px;width:72px;">500 144,96</div>
<div class="a cell b red r" style="left:1544px;top:269px;width:72px;">045 017,28</div>
<div class="a cell b r" style="left:1620px;top:269px;width:96px;">7 476 347</div>
<div class="a cell b r" style="left:1720px;top:269px;width:96px;">8 068 815</div>
<div class="a cell b r" style="left:1820px;top:269px;width:96px;">7 772 581</div>
<svg class="a" style="left:318px;top:298px;" width="7" height="7" viewBox="0 0 7 7"><path d="M6.500 0.500v6h-6z" fill="#555"/></svg>
<div class="a cb" style="left:332px;top:294px;width:13px;height:13px;"></div>
<div class="a cell b r" style="left:393px;top:291px;width:30px;">19</div>
<div class="a cell b" style="left:541px;top:291px;width:320px;letter-spacing:-0.302px;">SO_01: Bytový dům</div>
<div class="a cell b r" style="left:1047px;top:291px;width:110px;">8 108 976</div>
<div class="a cell b blue r" style="left:1470px;top:291px;width:72px;">500 144,96</div>
<div class="a cell b red r" style="left:1544px;top:291px;width:72px;">045 017,28</div>
<div class="a cell b r" style="left:1620px;top:291px;width:96px;">7 476 347</div>
<div class="a cell b r" style="left:1720px;top:291px;width:96px;">8 068 815</div>
<div class="a cell b r" style="left:1820px;top:291px;width:96px;">7 772 581</div>
<svg class="a" style="left:339px;top:320px;" width="7" height="7" viewBox="0 0 7 7"><path d="M6.500 0.500v6h-6z" fill="#555"/></svg>
<div class="a cb" style="left:353px;top:316px;width:13px;height:13px;"></div>
<div class="a cell b r" style="left:393px;top:313px;width:30px;">13</div>
<div class="a cell b" style="left:556px;top:313px;width:320px;letter-spacing:-0.137px;">006: Úpravy povrchu</div>
<div class="a cell b r" style="left:1047px;top:313px;width:110px;">7 555 853</div>
<div class="a cell b blue r" style="left:1470px;top:313px;width:72px;">008 611,14</div>
<div class="a cell b red r" style="left:1544px;top:313px;width:72px;">466 579,71</div>
<div class="a cell b r" style="left:1620px;top:313px;width:96px;">6 991 493</div>
<div class="a cell b r" style="left:1720px;top:313px;width:96px;">7 483 698</div>
<div class="a cell b r" style="left:1820px;top:313px;width:96px;">7 237 596</div>
<svg class="a" style="left:360px;top:342px;" width="7" height="7" viewBox="0 0 7 7"><path d="M6.500 0.500v6h-6z" fill="#555"/></svg>
<div class="a cb" style="left:374px;top:338px;width:13px;height:13px;"></div>
<div class="a cell b r" style="left:393px;top:335px;width:30px;">13</div>
<div class="a cell b" style="left:571px;top:335px;width:320px;letter-spacing:-0.134px;">0062: Úpravy povrchů vnější</div>
<div class="a cell b r" style="left:1047px;top:335px;width:110px;">7 555 853</div>
<div class="a cell b blue r" style="left:1470px;top:335px;width:72px;">008 611,14</div>
<div class="a cell b red r" style="left:1544px;top:335px;width:72px;">466 579,71</div>
<div class="a cell b r" style="left:1620px;top:335px;width:96px;">6 991 493</div>
<div class="a cell b r" style="left:1720px;top:335px;width:96px;">7 483 698</div>
<div class="a cell b r" style="left:1820px;top:335px;width:96px;">7 237 596</div>
<svg class="a" width="0" height="0" style="left:0;top:0"><defs><linearGradient id="ballg" x1="0" y1="0" x2="0" y2="1"><stop offset="0" stop-color="#b4dca0"/><stop offset="0.450" stop-color="#6cc040"/><stop offset="0.550" stop-color="#48c00c"/><stop offset="1" stop-color="#66ff00"/></linearGradient><linearGradient id="ballr" x1="0" y1="0" x2="0" y2="1"><stop offset="0" stop-color="#dca0a0"/><stop offset="0.450" stop-color="#d04848"/><stop offset="0.550" stop-color="#e01c00"/><stop offset="1" stop-color="#ff4c00"/></linearGradient></defs></svg>
<div class="a " style="left:1326px;top:356px;width:145px;height:21px;background:#ffe0e6"></div>
<div class="a " style="left:373px;top:377px;width:1525px;height:1px;background:#a9a9a9"></div>
<div class="a cb" style="left:378px;top:360px;width:13px;height:13px;"></div>
<div class="a cell  r" style="left:394px;top:357px;width:30px;">10</div>
<div class="a cell " style="left:442px;top:357px;width:82px;letter-spacing:-0.191px;">411Xx0001-...</div>
<div class="a cell " style="left:528px;top:357px;width:326px;letter-spacing:-0.013px;">Stěrková cementová omítka s proškrabovanými spáry ...</div>
<div class="a cell " style="left:865px;top:357px;width:24px;">m2</div>
<div class="a cell  r" style="left:891px;top:357px;width:64px;">225,025</div>
<div class="a cell  r" style="left:962px;top:357px;width:80px;">359,66</div>
<div class="a cell  r" style="left:1048px;top:357px;width:110px;">80 932</div>
<svg class="a" style="left:1184px;top:359px;" width="14" height="14" viewBox="0 0 14 14"><path d="M0 3.300L3.300 0L7 3.700L10.700 0L14 3.300L10.300 7L14 10.700L10.700 14L7 10.300L3.300 14L0 10.700L3.700 7z" fill="#a8a8a8"/></svg>
<svg class="a" style="left:1241px;top:359px;" width="14" height="14" viewBox="0 0 14 14"><circle cx="7" cy="7" r="6" fill="#2a9a00"/><circle cx="7" cy="7" r="4.700" fill="url(#ballg)"/></svg>
<div class="a cell  blue r" style="left:1470px;top:357px;width:73px;">76 508,53</div>
<div class="a cell  red r" style="left:1544px;top:357px;width:73px;">78 758,78</div>
<div class="a cell  r" style="left:1621px;top:357px;width:96px;">76 509</div>
<div class="a cell  r" style="left:1721px;top:357px;width:96px;">78 759</div>
<div class="a cell  r" style="left:1822px;top:357px;width:96px;">77 634</div>
<div class="a " style="left:1326px;top:378px;width:145px;height:21px;background:#ffe0e6"></div>
<div class="a " style="left:373px;top:399px;width:1525px;height:1px;background:#a9a9a9"></div>
<div class="a cb" style="left:378px;top:382px;width:13px;height:13px;"></div>
<div class="a cell  r" style="left:394px;top:379px;width:30px;">11</div>
<div class="a cell " style="left:442px;top:379px;width:82px;letter-spacing:-0.191px;">411Xx0002-...</div>
<div class="a cell " style="left:528px;top:379px;width:326px;letter-spacing:-0.039px;">Probarvovaná stěrková omítka na silikátové bázi na za...</div>
<div class="a cell " style="left:865px;top:379px;width:24px;">m2</div>
<div class="a cell  r" style="left:891px;top:379px;width:64px;">419,388</div>
<div class="a cell  r" style="left:962px;top:379px;width:80px;">272,84</div>
<div class="a cell  r" style="left:1048px;top:379px;width:110px;">114 428</div>
<svg class="a" style="left:1184px;top:381px;" width="14" height="14" viewBox="0 0 14 14"><path d="M0 3.300L3.300 0L7 3.700L10.700 0L14 3.300L10.300 7L14 10.700L10.700 14L7 10.300L3.300 14L0 10.700L3.700 7z" fill="#a8a8a8"/></svg>
<svg class="a" style="left:1241px;top:381px;" width="14" height="14" viewBox="0 0 14 14"><circle cx="7" cy="7" r="6" fill="#c00000"/><circle cx="7" cy="7" r="4.700" fill="url(#ballr)"/></svg>
<div class="a cell  red r" style="left:1470px;top:379px;width:73px;">112 396,01</div>
<div class="a cell  blue r" style="left:1544px;top:379px;width:73px;">104 847,03</div>
<div class="a cell  r" style="left:1621px;top:379px;width:96px;">104 847</div>
<div class="a cell  r" style="left:1721px;top:379px;width:96px;">112 396</div>
<div class="a cell  r" style="left:1822px;top:379px;width:96px;">108 622</div>
<div class="a " style="left:1326px;top:400px;width:145px;height:21px;background:#ffe0e6"></div>
<div class="a " style="left:373px;top:421px;width:1525px;height:1px;background:#a9a9a9"></div>
<div class="a cb" style="left:378px;top:404px;width:13px;height:13px;"></div>
<div class="a cell  r" style="left:394px;top:401px;width:30px;">12</div>
<div class="a cell " style="left:442px;top:401px;width:82px;letter-spacing:-0.191px;">411Xx0003-...</div>
<div class="a cell " style="left:528px;top:401px;width:326px;letter-spacing:-0.005px;">Probarvovaná stěrková omítka na silikátové bázi na te...</div>
<div class="a cell " style="left:865px;top:401px;width:24px;">m2</div>
<div class="a cell  r" style="left:891px;top:401px;width:64px;">79,647</div>
<div class="a cell  r" style="left:962px;top:401px;width:80px;">272,84</div>
<div class="a cell  r" style="left:1048px;top:401px;width:110px;">21 731</div>
<svg class="a" style="left:1184px;top:403px;" width="14" height="14" viewBox="0 0 14 14"><path d="M0 3.300L3.300 0L7 3.700L10.700 0L14 3.300L10.300 7L14 10.700L10.700 14L7 10.300L3.300 14L0 10.700L3.700 7z" fill="#a8a8a8"/></svg>
<svg class="a" style="left:1241px;top:403px;" width="14" height="14" viewBox="0 0 14 14"><circle cx="7" cy="7" r="6" fill="#c00000"/><circle cx="7" cy="7" r="4.700" fill="url(#ballr)"/></svg>
<div class="a cell  red r" style="left:1470px;top:401px;width:73px;">21 345,42</div>
<div class="a cell  blue r" style="left:1544px;top:401px;width:73px;">19 911,78</div>
<div class="a cell  r" style="left:1621px;top:401px;width:96px;">19 912</div>
<div class="a cell  r" style="left:1721px;top:401px;width:96px;">21 345</div>
<div class="a cell  r" style="left:1822px;top:401px;width:96px;">20 629</div>
<div class="a " style="left:1326px;top:422px;width:145px;height:21px;background:#ffe0e6"></div>
<div class="a " style="left:373px;top:443px;width:1525px;height:1px;background:#a9a9a9"></div>
<div class="a cb" style="left:378px;top:426px;width:13px;height:13px;"></div>
<div class="a cell  r" style="left:394px;top:423px;width:30px;">13</div>
<div class="a cell " style="left:442px;top:423px;width:82px;letter-spacing:-0.207px;">415Km1011...</div>
<div class="a cell " style="left:528px;top:423px;width:326px;letter-spacing:-0.043px;">Zateplovací systémy stěn budov se základní povrchov...</div>
<div class="a cell " style="left:865px;top:423px;width:24px;">m2</div>
<div class="a cell  r" style="left:891px;top:423px;width:64px;">1 997,580</div>
<div class="a cell  r" style="left:962px;top:423px;width:80px;">953,79</div>
<div class="a cell  r" style="left:1048px;top:423px;width:110px;">1 905 263</div>
<svg class="a" style="left:1184px;top:425px;" width="14" height="14" viewBox="0 0 14 14"><path d="M0 3.300L3.300 0L7 3.700L10.700 0L14 3.300L10.300 7L14 10.700L10.700 14L7 10.300L3.300 14L0 10.700L3.700 7z" fill="#a8a8a8"/></svg>
<svg class="a" style="left:1241px;top:425px;" width="14" height="14" viewBox="0 0 14 14"><circle cx="7" cy="7" r="6" fill="#2a9a00"/><circle cx="7" cy="7" r="4.700" fill="url(#ballg)"/></svg>
<div class="a cell  blue r" style="left:1470px;top:423px;width:73px;">1 717 918...</div>
<div class="a cell  red r" style="left:1544px;top:423px;width:73px;">1 897 701...</div>
<div class="a cell  r" style="left:1621px;top:423px;width:96px;">1 717 919</div>
<div class="a cell  r" style="left:1721px;top:423px;width:96px;">1 897 701</div>
<div class="a cell  r" style="left:1822px;top:423px;width:96px;">1 807 810</div>
<div class="a " style="left:1326px;top:444px;width:145px;height:21px;background:#ffe0e6"></div>
<div class="a " style="left:373px;top:465px;width:1525px;height:1px;background:#a9a9a9"></div>
<div class="a cb" style="left:378px;top:448px;width:13px;height:13px;"></div>
<div class="a cell  r" style="left:394px;top:445px;width:30px;">14</div>
<div class="a cell " style="left:442px;top:445px;width:82px;letter-spacing:-0.288px;">415Km1012...</div>
<div class="a cell " style="left:528px;top:445px;width:326px;letter-spacing:-0.043px;">Zateplovací systémy stěn budov se základní povrchov...</div>
<div class="a cell " style="left:865px;top:445px;width:24px;">m2</div>
<div class="a cell  r" style="left:891px;top:445px;width:64px;">419,388</div>
<div class="a cell  r" style="left:962px;top:445px;width:80px;">953,79</div>
<div class="a cell  r" style="left:1048px;top:445px;width:110px;">400 006</div>
<svg class="a" style="left:1184px;top:447px;" width="14" height="14" viewBox="0 0 14 14"><path d="M0 3.300L3.300 0L7 3.700L10.700 0L14 3.300L10.300 7L14 10.700L10.700 14L7 10.300L3.300 14L0 10.700L3.700 7z" fill="#a8a8a8"/></svg>
<svg class="a" style="left:1241px;top:447px;" width="14" height="14" viewBox="0 0 14 14"><circle cx="7" cy="7" r="6" fill="#2a9a00"/><circle cx="7" cy="7" r="4.700" fill="url(#ballg)"/></svg>
<div class="a cell  blue r" style="left:1470px;top:445px;width:73px;">360 673,68</div>
<div class="a cell  red r" style="left:1544px;top:445px;width:73px;">398 418,60</div>
<div class="a cell  r" style="left:1621px;top:445px;width:96px;">360 674</div>
<div class="a cell  r" style="left:1721px;top:445px;width:96px;">398 419</div>
<div class="a cell  r" style="left:1822px;top:445px;width:96px;">379 546</div>
<div class="a " style="left:1326px;top:466px;width:145px;height:21px;background:#ffe0e6"></div>
<div class="a " style="left:373px;top:487px;width:1525px;height:1px;background:#a9a9a9"></div>
<div class="a cb" style="left:378px;top:470px;width:13px;height:13px;"></div>
<div class="a cell  r" style="left:394px;top:467px;width:30px;">15</div>
<div class="a cell " style="left:442px;top:467px;width:82px;letter-spacing:-0.288px;">415Km1013...</div>
<div class="a cell " style="left:528px;top:467px;width:326px;letter-spacing:-0.000px;">Zateplovací systémy podhledů budov se zákl. povrcho...</div>
<div class="a cell " style="left:865px;top:467px;width:24px;">m2</div>
<div class="a cell  r" style="left:891px;top:467px;width:64px;">74,600</div>
<div class="a cell  r" style="left:962px;top:467px;width:80px;">953,79</div>
<div class="a cell  r" style="left:1048px;top:467px;width:110px;">71 153</div>
<svg class="a" style="left:1184px;top:469px;" width="14" height="14" viewBox="0 0 14 14"><path d="M0 3.300L3.300 0L7 3.700L10.700 0L14 3.300L10.300 7L14 10.700L10.700 14L7 10.300L3.300 14L0 10.700L3.700 7z" fill="#a8a8a8"/></svg>
<svg class="a" style="left:1241px;top:469px;" width="14" height="14" viewBox="0 0 14 14"><circle cx="7" cy="7" r="6" fill="#2a9a00"/><circle cx="7" cy="7" r="4.700" fill="url(#ballg)"/></svg>
<div class="a cell  blue r" style="left:1470px;top:467px;width:73px;">65 648,26</div>
<div class="a cell  red r" style="left:1544px;top:467px;width:73px;">70 870,29</div>
<div class="a cell  r" style="left:1621px;top:467px;width:96px;">65 648</div>
<div class="a cell  r" style="left:1721px;top:467px;width:96px;">70 870</div>
<div class="a cell  r" style="left:1822px;top:467px;width:96px;">68 259</div>
<div class="a " style="left:1326px;top:488px;width:145px;height:21px;background:#ffe0e6"></div>
<div class="a " style="left:373px;top:509px;width:1525px;height:1px;background:#a9a9a9"></div>
<div class="a cb" style="left:378px;top:492px;width:13px;height:13px;"></div>
<div class="a cell  r" style="left:394px;top:489px;width:30px;">16</div>
<div class="a cell " style="left:442px;top:489px;width:82px;letter-spacing:-0.288px;">415Km1014...</div>
<div class="a cell " style="left:528px;top:489px;width:326px;letter-spacing:-0.043px;">Zateplovací systémy stěn budov se základní povrchov...</div>
<div class="a cell " style="left:865px;top:489px;width:24px;">m2</div>
<div class="a cell  r" style="left:891px;top:489px;width:64px;">46,750</div>
<div class="a cell  r" style="left:962px;top:489px;width:80px;">953,79</div>
<div class="a cell  r" style="left:1048px;top:489px;width:110px;">44 589</div>
<svg class="a" style="left:1184px;top:491px;" width="14" height="14" viewBox="0 0 14 14"><path d="M0 3.300L3.300 0L7 3.700L10.700 0L14 3.300L10.300 7L14 10.700L10.700 14L7 10.300L3.300 14L0 10.700L3.700 7z" fill="#a8a8a8"/></svg>
<svg class="a" style="left:1241px;top:491px;" width="14" height="14" viewBox="0 0 14 14"><circle cx="7" cy="7" r="6" fill="#2a9a00"/><circle cx="7" cy="7" r="4.700" fill="url(#ballg)"/></svg>
<div class="a cell  blue r" style="left:1470px;top:489px;width:73px;">41 139,65</div>
<div class="a cell  red r" style="left:1544px;top:489px;width:73px;">44 412,12</div>
<div class="a cell  r" style="left:1621px;top:489px;width:96px;">41 140</div>
<div class="a cell  r" style="left:1721px;top:489px;width:96px;">44 412</div>
<div class="a cell  r" style="left:1822px;top:489px;width:96px;">42 776</div>
<div class="a " style="left:1326px;top:510px;width:145px;height:21px;background:#ffe0e6"></div>
<div class="a " style="left:373px;top:531px;width:1525px;height:1px;background:#a9a9a9"></div>
<div class="a cb" style="left:378px;top:514px;width:13px;height:13px;"></div>
<div class="a cell  r" style="left:394px;top:511px;width:30px;">17</div>
<div class="a cell " style="left:442px;top:511px;width:82px;letter-spacing:-0.248px;">415Kn7011-...</div>
<div class="a cell " style="left:528px;top:511px;width:326px;letter-spacing:-0.028px;">Zateplovací systémy stěn budov bez základní povrcho...</div>
<div class="a cell " style="left:865px;top:511px;width:24px;">m2</div>
<div class="a cell  r" style="left:891px;top:511px;width:64px;">105,954</div>
<div class="a cell  r" style="left:962px;top:511px;width:80px;">966,15</div>
<div class="a cell  r" style="left:1048px;top:511px;width:110px;">102 367</div>
<svg class="a" style="left:1184px;top:513px;" width="14" height="14" viewBox="0 0 14 14"><path d="M0 3.300L3.300 0L7 3.700L10.700 0L14 3.300L10.300 7L14 10.700L10.700 14L7 10.300L3.300 14L0 10.700L3.700 7z" fill="#a8a8a8"/></svg>
<svg class="a" style="left:1241px;top:513px;" width="14" height="14" viewBox="0 0 14 14"><circle cx="7" cy="7" r="6" fill="#2a9a00"/><circle cx="7" cy="7" r="4.700" fill="url(#ballg)"/></svg>
<div class="a cell  blue r" style="left:1470px;top:511px;width:73px;">97 477,77</div>
<div class="a cell  red r" style="left:1544px;top:511px;width:73px;">100 656,40</div>
<div class="a cell  r" style="left:1621px;top:511px;width:96px;">97 478</div>
<div class="a cell  r" style="left:1721px;top:511px;width:96px;">100 656</div>
<div class="a cell  r" style="left:1822px;top:511px;width:96px;">99 067</div>
<div class="a " style="left:1326px;top:532px;width:145px;height:21px;background:#ffe0e6"></div>
<div class="a " style="left:373px;top:553px;width:1525px;height:1px;background:#a9a9a9"></div>
<div class="a cb" style="left:378px;top:536px;width:13px;height:13px;"></div>
<div class="a cell  r" style="left:394px;top:533px;width:30px;">18</div>
<div class="a cell " style="left:442px;top:533px;width:82px;letter-spacing:-0.285px;">416Vu6030-...</div>
<div class="a cell " style="left:528px;top:533px;width:326px;letter-spacing:0.127px;">Hydrofobizační nátěr na pohledový beton</div>
<div class="a cell " style="left:865px;top:533px;width:24px;">m2</div>
<div class="a cell  r" style="left:891px;top:533px;width:64px;">88,772</div>
<div class="a cell  r" style="left:962px;top:533px;width:80px;">25,31</div>
<div class="a cell  r" style="left:1048px;top:533px;width:110px;">2 247</div>
<svg class="a" style="left:1184px;top:535px;" width="14" height="14" viewBox="0 0 14 14"><path d="M0 3.300L3.300 0L7 3.700L10.700 0L14 3.300L10.300 7L14 10.700L10.700 14L7 10.300L3.300 14L0 10.700L3.700 7z" fill="#a8a8a8"/></svg>
<svg class="a" style="left:1241px;top:535px;" width="14" height="14" viewBox="0 0 14 14"><circle cx="7" cy="7" r="6" fill="#2a9a00"/><circle cx="7" cy="7" r="4.700" fill="url(#ballg)"/></svg>
<div class="a cell  blue r" style="left:1470px;top:533px;width:73px;">2 485,62</div>
<div class="a cell  blue r" style="left:1544px;top:533px;width:73px;">2 485,62</div>
<div class="a cell  r" style="left:1621px;top:533px;width:96px;">2 486</div>
<div class="a cell  r" style="left:1721px;top:533px;width:96px;">2 486</div>
<div class="a cell  r" style="left:1822px;top:533px;width:96px;">2 486</div>
<div class="a " style="left:373px;top:554px;width:1525px;height:21px;background:#0063d1;border-top:1px dotted #ffa828;border-bottom:1px dotted #ffa828"></div>
<div class="a " style="left:373px;top:575px;width:1525px;height:1px;background:#a9a9a9"></div>
<svg class="a" style="left:281px;top:560px;" width="5" height="9" viewBox="0 0 5 9"><path d="M0.500 0.500l4 4l-4 4z" fill="#555"/></svg>
<div class="a cb" style="left:378px;top:558px;width:13px;height:13px;"></div>
<div class="a cell  sw r" style="left:394px;top:555px;width:30px;">19</div>
<div class="a cell  sw" style="left:442px;top:555px;width:82px;letter-spacing:-0.322px;">415Aa0100-...</div>
<div class="a cell  sw" style="left:528px;top:555px;width:326px;letter-spacing:-0.282px;">Fasádní desky CETRIS FINISCH tl. 8 - 10 mm na zatepl...</div>
<div class="a cell  sw" style="left:865px;top:555px;width:24px;">m2</div>
<div class="a cell  sw r" style="left:891px;top:555px;width:64px;">1 561,315</div>
<div class="a cell  sw r" style="left:962px;top:555px;width:80px;">2 728,44</div>
<div class="a cell  sw r" style="left:1048px;top:555px;width:110px;">4 259 955</div>
<svg class="a" style="left:1184px;top:557px;" width="14" height="14" viewBox="0 0 14 14"><path d="M0 3.300L3.300 0L7 3.700L10.700 0L14 3.300L10.300 7L14 10.700L10.700 14L7 10.300L3.300 14L0 10.700L3.700 7z" fill="#1c5aa6"/></svg>
<div class="a " style="left:1220px;top:554px;width:53px;height:21px;background:#fff;border-top:1px dotted #111;border-bottom:1px dotted #111"></div>
<svg class="a" style="left:1241px;top:557px;" width="14" height="14" viewBox="0 0 14 14"><circle cx="7" cy="7" r="6" fill="#c00000"/><circle cx="7" cy="7" r="4.700" fill="url(#ballr)"/></svg>
<div class="a cell  sw r" style="left:1470px;top:555px;width:73px;">3 981 353...</div>
<div class="a cell  sw r" style="left:1544px;top:555px;width:73px;">4 215 551...</div>
<div class="a cell  sw r" style="left:1621px;top:555px;width:96px;">3 981 354</div>
<div class="a cell  sw r" style="left:1721px;top:555px;width:96px;">4 215 551</div>
<div class="a cell  sw r" style="left:1822px;top:555px;width:96px;">4 098 452</div>
<div class="a " style="left:1326px;top:576px;width:145px;height:21px;background:#ffe0e6"></div>
<div class="a " style="left:373px;top:597px;width:1525px;height:1px;background:#a9a9a9"></div>
<div class="a cb" style="left:378px;top:580px;width:13px;height:13px;"></div>
<div class="a cell  r" style="left:394px;top:577px;width:30px;">20</div>
<div class="a cell " style="left:442px;top:577px;width:82px;letter-spacing:-0.322px;">415Aa0104-...</div>
<div class="a cell " style="left:528px;top:577px;width:326px;letter-spacing:-0.279px;">Fasádní desky CETRIS LASUR tl. 8 - 10 mm na zateplo...</div>
<div class="a cell " style="left:865px;top:577px;width:24px;">m2</div>
<div class="a cell  r" style="left:891px;top:577px;width:64px;">48,530</div>
<div class="a cell  r" style="left:962px;top:577px;width:80px;">2 356,38</div>
<div class="a cell  r" style="left:1048px;top:577px;width:110px;">114 355</div>
<svg class="a" style="left:1184px;top:579px;" width="14" height="14" viewBox="0 0 14 14"><path d="M0 3.300L3.300 0L7 3.700L10.700 0L14 3.300L10.300 7L14 10.700L10.700 14L7 10.300L3.300 14L0 10.700L3.700 7z" fill="#a8a8a8"/></svg>
<svg class="a" style="left:1241px;top:579px;" width="14" height="14" viewBox="0 0 14 14"><circle cx="7" cy="7" r="6" fill="#c00000"/><circle cx="7" cy="7" r="4.700" fill="url(#ballr)"/></svg>
<div class="a cell  blue r" style="left:1470px;top:577px;width:73px;">109 192,50</div>
<div class="a cell  red r" style="left:1544px;top:577px;width:73px;">111 619,00</div>
<div class="a cell  r" style="left:1621px;top:577px;width:96px;">109 193</div>
<div class="a cell  r" style="left:1721px;top:577px;width:96px;">111 619</div>
<div class="a cell  r" style="left:1822px;top:577px;width:96px;">110 406</div>
<div class="a " style="left:1326px;top:598px;width:145px;height:21px;background:#ffe0e6"></div>
<div class="a " style="left:373px;top:619px;width:1525px;height:1px;background:#a9a9a9"></div>
<div class="a cb" style="left:378px;top:602px;width:13px;height:13px;"></div>
<div class="a cell  r" style="left:394px;top:599px;width:30px;">21</div>
<div class="a cell " style="left:442px;top:599px;width:82px;letter-spacing:-0.322px;">415Aa0108-...</div>
<div class="a cell " style="left:528px;top:599px;width:326px;letter-spacing:-0.261px;">Fasádní desky CETRIS na zateplovací systém tl. 100 m...</div>
<div class="a cell " style="left:865px;top:599px;width:24px;">m2</div>
<div class="a cell  r" style="left:891px;top:599px;width:64px;">46,750</div>
<div class="a cell  r" style="left:962px;top:599px;width:80px;">2 480,40</div>
<div class="a cell  r" style="left:1048px;top:599px;width:110px;">115 958</div>
<svg class="a" style="left:1184px;top:601px;" width="14" height="14" viewBox="0 0 14 14"><path d="M0 3.300L3.300 0L7 3.700L10.700 0L14 3.300L10.300 7L14 10.700L10.700 14L7 10.300L3.300 14L0 10.700L3.700 7z" fill="#a8a8a8"/></svg>
<svg class="a" style="left:1241px;top:601px;" width="14" height="14" viewBox="0 0 14 14"><circle cx="7" cy="7" r="6" fill="#c00000"/><circle cx="7" cy="7" r="4.700" fill="url(#ballr)"/></svg>
<div class="a cell  blue r" style="left:1470px;top:599px;width:73px;">105 186,60</div>
<div class="a cell  red r" style="left:1544px;top:599px;width:73px;">112 199,04</div>
<div class="a cell  r" style="left:1621px;top:599px;width:96px;">105 187</div>
<div class="a cell  r" style="left:1721px;top:599px;width:96px;">112 199</div>
<div class="a cell  r" style="left:1822px;top:599px;width:96px;">108 693</div>
<div class="a " style="left:277px;top:617px;width:1621px;height:30px;background:#f0f0f0"></div>
<div class="a " style="left:277px;top:617px;width:1621px;height:1px;background:#a9a9a9"></div>
<div class="a fc" style="left:393px;top:620px;width:44px;padding-right:12px">19</div>
<div class="a fc" style="left:1044px;top:620px;width:115px;">8 108 976</div>
<div class="a fc" style="left:1470px;top:620px;width:74px;padding-right:3px">7 500 144,</div>
<div class="a fc" style="left:1545px;top:620px;width:73px;padding-right:3px">8 045 017,</div>
<div class="a fc" style="left:1619px;top:620px;width:99px;">7 476 347</div>
<div class="a fc" style="left:1719px;top:620px;width:99px;">8 068 815</div>
<div class="a fc" style="left:1819px;top:620px;width:101px;padding-right:5px">7 772 581</div>
<div class="a " style="left:1916px;top:167px;width:2px;height:500px;background:#f0f0f0"></div>
<div class="a " style="left:1915px;top:167px;width:1px;height:497px;background:#a9a9a9"></div>
<div class="a " style="left:1898px;top:167px;width:17px;height:480px;background:#e8e8e8"></div>
<div class="a " style="left:1898px;top:184px;width:17px;height:371px;background:#c9c9c9"></div>
<div class="a " style="left:1898px;top:647px;width:17px;height:17px;background:#f0f0f0"></div>
<svg class="a" style="left:1902px;top:172px;" width="9" height="6" viewBox="0 0 9 6"><path d="M1 5l3.500-3.500l3.500 3.500" fill="none" stroke="#555" stroke-width="1.500"/></svg>
<svg class="a" style="left:1902px;top:636px;" width="9" height="6" viewBox="0 0 9 6"><path d="M1 1l3.500 3.500l3.500-3.500" fill="none" stroke="#555" stroke-width="1.500"/></svg>
<div class="a " style="left:277px;top:647px;width:1621px;height:17px;background:#e8e8e8"></div>
<div class="a " style="left:295px;top:647px;width:1498px;height:17px;background:#cdcdcd"></div>
<svg class="a" style="left:282px;top:652px;" width="6" height="9" viewBox="0 0 6 9"><path d="M5 1l-3.500 3.500l3.500 3.500" fill="none" stroke="#555" stroke-width="1.500"/></svg>
<svg class="a" style="left:1887px;top:652px;" width="6" height="9" viewBox="0 0 6 9"><path d="M1 1l3.500 3.500l-3.500 3.500" fill="none" stroke="#555" stroke-width="1.500"/></svg>
<div class="a " style="left:1087px;top:670px;width:19px;height:2px;background:repeating-linear-gradient(90deg,#555 0 2px,transparent 2px 4px)"></div>
<svg class="a" style="left:283px;top:686px;" width="15" height="15" viewBox="0 0 15 15"><path d="M7 1.500v10M3.500 12.500h7M2 3.500h10" stroke="#c03a2a" stroke-width="1.200" fill="none"/><path d="M0.500 8l2-4.500l2 4.500z M9.500 8l2-4.500l2 4.500z" fill="#f2b8a8" stroke="#c03a2a" stroke-width="0.800"/><circle cx="11.500" cy="11.500" r="2.500" fill="#f5c020"/></svg>
<div class="a " style="left:304px;top:686px;font-size:12px;color:#333;line-height:15px">Nabídky</div>
<svg class="a" style="left:357px;top:686px;" width="15" height="15" viewBox="0 0 16 16"><circle cx="6.500" cy="6.500" r="6" fill="#f5c020" stroke="#c8901a"/><text x="3.500" y="9.500" font-family="Liberation Sans, sans-serif" font-size="8" font-weight="bold" fill="#a8700a">%</text><rect x="8.500" y="8.500" width="6" height="6" fill="#2a5ab0" stroke="#1a3a80" stroke-width="0.600"/><path d="M10 10.500h3M10 12.500h3" stroke="#fff" stroke-width="0.800"/></svg>
<div class="a " style="left:378px;top:686px;font-size:12px;color:#333;line-height:15px">Cenový poradce</div>
<svg class="a" style="left:475px;top:686px;" width="15" height="14" viewBox="0 0 15 14"><rect x="4.500" y="5.500" width="9" height="7" fill="#f5b800" stroke="#b8860b"/><rect x="0.500" y="0.500" width="9" height="7" fill="#dcdcdc" stroke="#666"/><path d="M3 4h4" stroke="#777" stroke-width="0.900"/></svg>
<div class="a " style="left:496px;top:686px;font-size:12px;color:#333;line-height:15px;letter-spacing:-0.200px">Výskyt v poptávkách</div>
<div class="a " style="left:605px;top:678px;width:132px;height:28px;background:#f0f0f0;border:1px solid #b4b4b4;border-bottom:none"></div>
<svg class="a" style="left:612px;top:685px;" width="14" height="14" viewBox="0 0 14 14"><path d="M0.500 1.500h4.500l1 1.500h6v9.500h-11.500z" fill="#fff" stroke="#666"/></svg>
<div class="a " style="left:632px;top:686px;font-size:12px;color:#111;line-height:15px;letter-spacing:-0.100px">Položka v rozpočtu</div>
<div class="a " style="left:276px;top:704px;width:1640px;height:268px;background:#f0f0f0;border:1px solid #b4b4b4"></div>
<div class="a " style="left:278px;top:706px;width:1636px;height:264px;background:#fff;border:1px solid #a9a9a9"></div>
<div class="a " style="left:606px;top:704px;width:130px;height:2px;background:#f0f0f0"></div>
<div class="a " style="left:279px;top:707px;width:1634px;height:45px;background:#f0f0f0"></div>
<div class="a " style="left:279px;top:729px;width:1634px;height:1px;background:#a9a9a9"></div>
<div class="a " style="left:279px;top:751px;width:1634px;height:1px;background:#a9a9a9"></div>
<div class="a " style="left:279px;top:773px;width:1634px;height:1px;background:#a9a9a9"></div>
<div class="a " style="left:290px;top:707px;width:1px;height:67px;background:#a9a9a9"></div>
<div class="a " style="left:1452px;top:707px;width:1px;height:45px;background:#a9a9a9"></div>
<svg class="a" style="left:281px;top:715px;" width="7" height="7" viewBox="0 0 7 7"><path d="M3.500 0v7M0 3.500h7M1 1l5 5M6 1l-5 5" stroke="#555" stroke-width="0.700" fill="none"/></svg>
<svg class="a" style="left:281px;top:737px;" width="7" height="7" viewBox="0 0 7 7"><path d="M3.500 0v7M0 3.500h7M1 1l5 5M6 1l-5 5" stroke="#555" stroke-width="0.700" fill="none"/></svg>
<div class="a b c" style="left:771.0px;top:711px;width:200px;color:#333;letter-spacing:-0.069px;">Položka z rozpočtu</div>
<div class="a b c" style="left:1582.0px;top:711px;width:200px;color:#333">Rozdíl</div>
<div class="a hdr" style="left:292px;top:733px;">Kód položky</div>
<div class="a " style="left:524px;top:730px;width:1px;height:21px;background:#a9a9a9"></div>
<div class="a hdr" style="left:527px;top:733px;">Popis</div>
<div class="a " style="left:1201px;top:730px;width:1px;height:21px;background:#a9a9a9"></div>
<div class="a hdr" style="left:1204px;top:733px;">MJ</div>
<div class="a " style="left:1297px;top:730px;width:1px;height:21px;background:#a9a9a9"></div>
<div class="a hdr" style="left:1300px;top:733px;">Výměra</div>
<div class="a " style="left:1452px;top:730px;width:1px;height:21px;background:#a9a9a9"></div>
<div class="a hdr" style="left:1455px;top:733px;">Kód</div>
<div class="a " style="left:1567px;top:730px;width:1px;height:21px;background:#a9a9a9"></div>
<div class="a hdr" style="left:1570px;top:733px;">Popis</div>
<div class="a " style="left:1682px;top:730px;width:1px;height:21px;background:#a9a9a9"></div>
<div class="a hdr" style="left:1685px;top:733px;">MJ</div>
<div class="a " style="left:1797px;top:730px;width:1px;height:21px;background:#a9a9a9"></div>
<div class="a hdr" style="left:1800px;top:733px;">Výměra</div>
<div class="a " style="left:291px;top:752px;width:1622px;height:21px;background:#d9e8fc"></div>
<div class="a " style="left:1568px;top:752px;width:115px;height:21px;background:#fff"></div>
<div class="a " style="left:279px;top:752px;width:11px;height:21px;background:#f0f0f0"></div>
<svg class="a" style="left:283px;top:758px;" width="5" height="9" viewBox="0 0 5 9"><path d="M0.500 0.500l4 4l-4 4z" fill="#444"/></svg>
<div class="a cell " style="left:296px;top:753px;width:220px;height:20px;line-height:21px;letter-spacing:-0.249px;">415Aa0100-001</div>
<div class="a cell " style="left:530px;top:753px;width:672px;height:20px;line-height:21px;letter-spacing:-0.130px;">Fasádní desky CETRIS FINISCH tl. 8 - 10 mm na zateplovací systém tl. 140 mm (viz samostatná položka) barva tma...</div>
<div class="a cell c" style="left:1203px;top:753px;width:96px;height:20px;line-height:21px">m2</div>
<div class="a cell  r" style="left:1311px;top:753px;width:140px;height:20px;line-height:21px">1 561,315</div>
<svg class="a" style="left:1505px;top:755px;" width="14" height="14" viewBox="0 0 14 14"><circle cx="7" cy="7" r="6" fill="#2a9a00"/><circle cx="7" cy="7" r="4.700" fill="url(#ballg)"/></svg>
<svg class="a" style="left:1620px;top:755px;" width="14" height="14" viewBox="0 0 14 14"><circle cx="7" cy="7" r="6" fill="#c00000"/><circle cx="7" cy="7" r="4.700" fill="url(#ballr)"/></svg>
<svg class="a" style="left:1735px;top:755px;" width="14" height="14" viewBox="0 0 14 14"><circle cx="7" cy="7" r="6" fill="#2a9a00"/><circle cx="7" cy="7" r="4.700" fill="url(#ballg)"/></svg>
<svg class="a" style="left:1850px;top:755px;" width="14" height="14" viewBox="0 0 14 14"><circle cx="7" cy="7" r="6" fill="#2a9a00"/><circle cx="7" cy="7" r="4.700" fill="url(#ballg)"/></svg>
<div class="a " style="left:278px;top:978px;font-size:11px;color:#333;line-height:14px;letter-spacing:-0.150px">Celkem: 19</div>
<div class="a " style="left:354px;top:978px;font-size:11px;color:#333;line-height:14px;letter-spacing:-0.150px">Označeno: 0</div>
<div class="a " style="left:1794px;top:973px;width:122px;height:24px;background:#ababab;border:1px solid #999"></div>
<svg class="a" style="left:1828px;top:977px;" width="16" height="17" viewBox="0 0 16 17"><circle cx="6.500" cy="6.500" r="5.500" fill="#dfeaf5" stroke="#444" stroke-width="1.200"/><path d="M10.500 10.500l4.500 5" stroke="#333" stroke-width="2"/></svg>
<div class="a " style="left:1847px;top:978px;font-size:11px;color:#222;line-height:14px">Detaily</div>
</body></html>
